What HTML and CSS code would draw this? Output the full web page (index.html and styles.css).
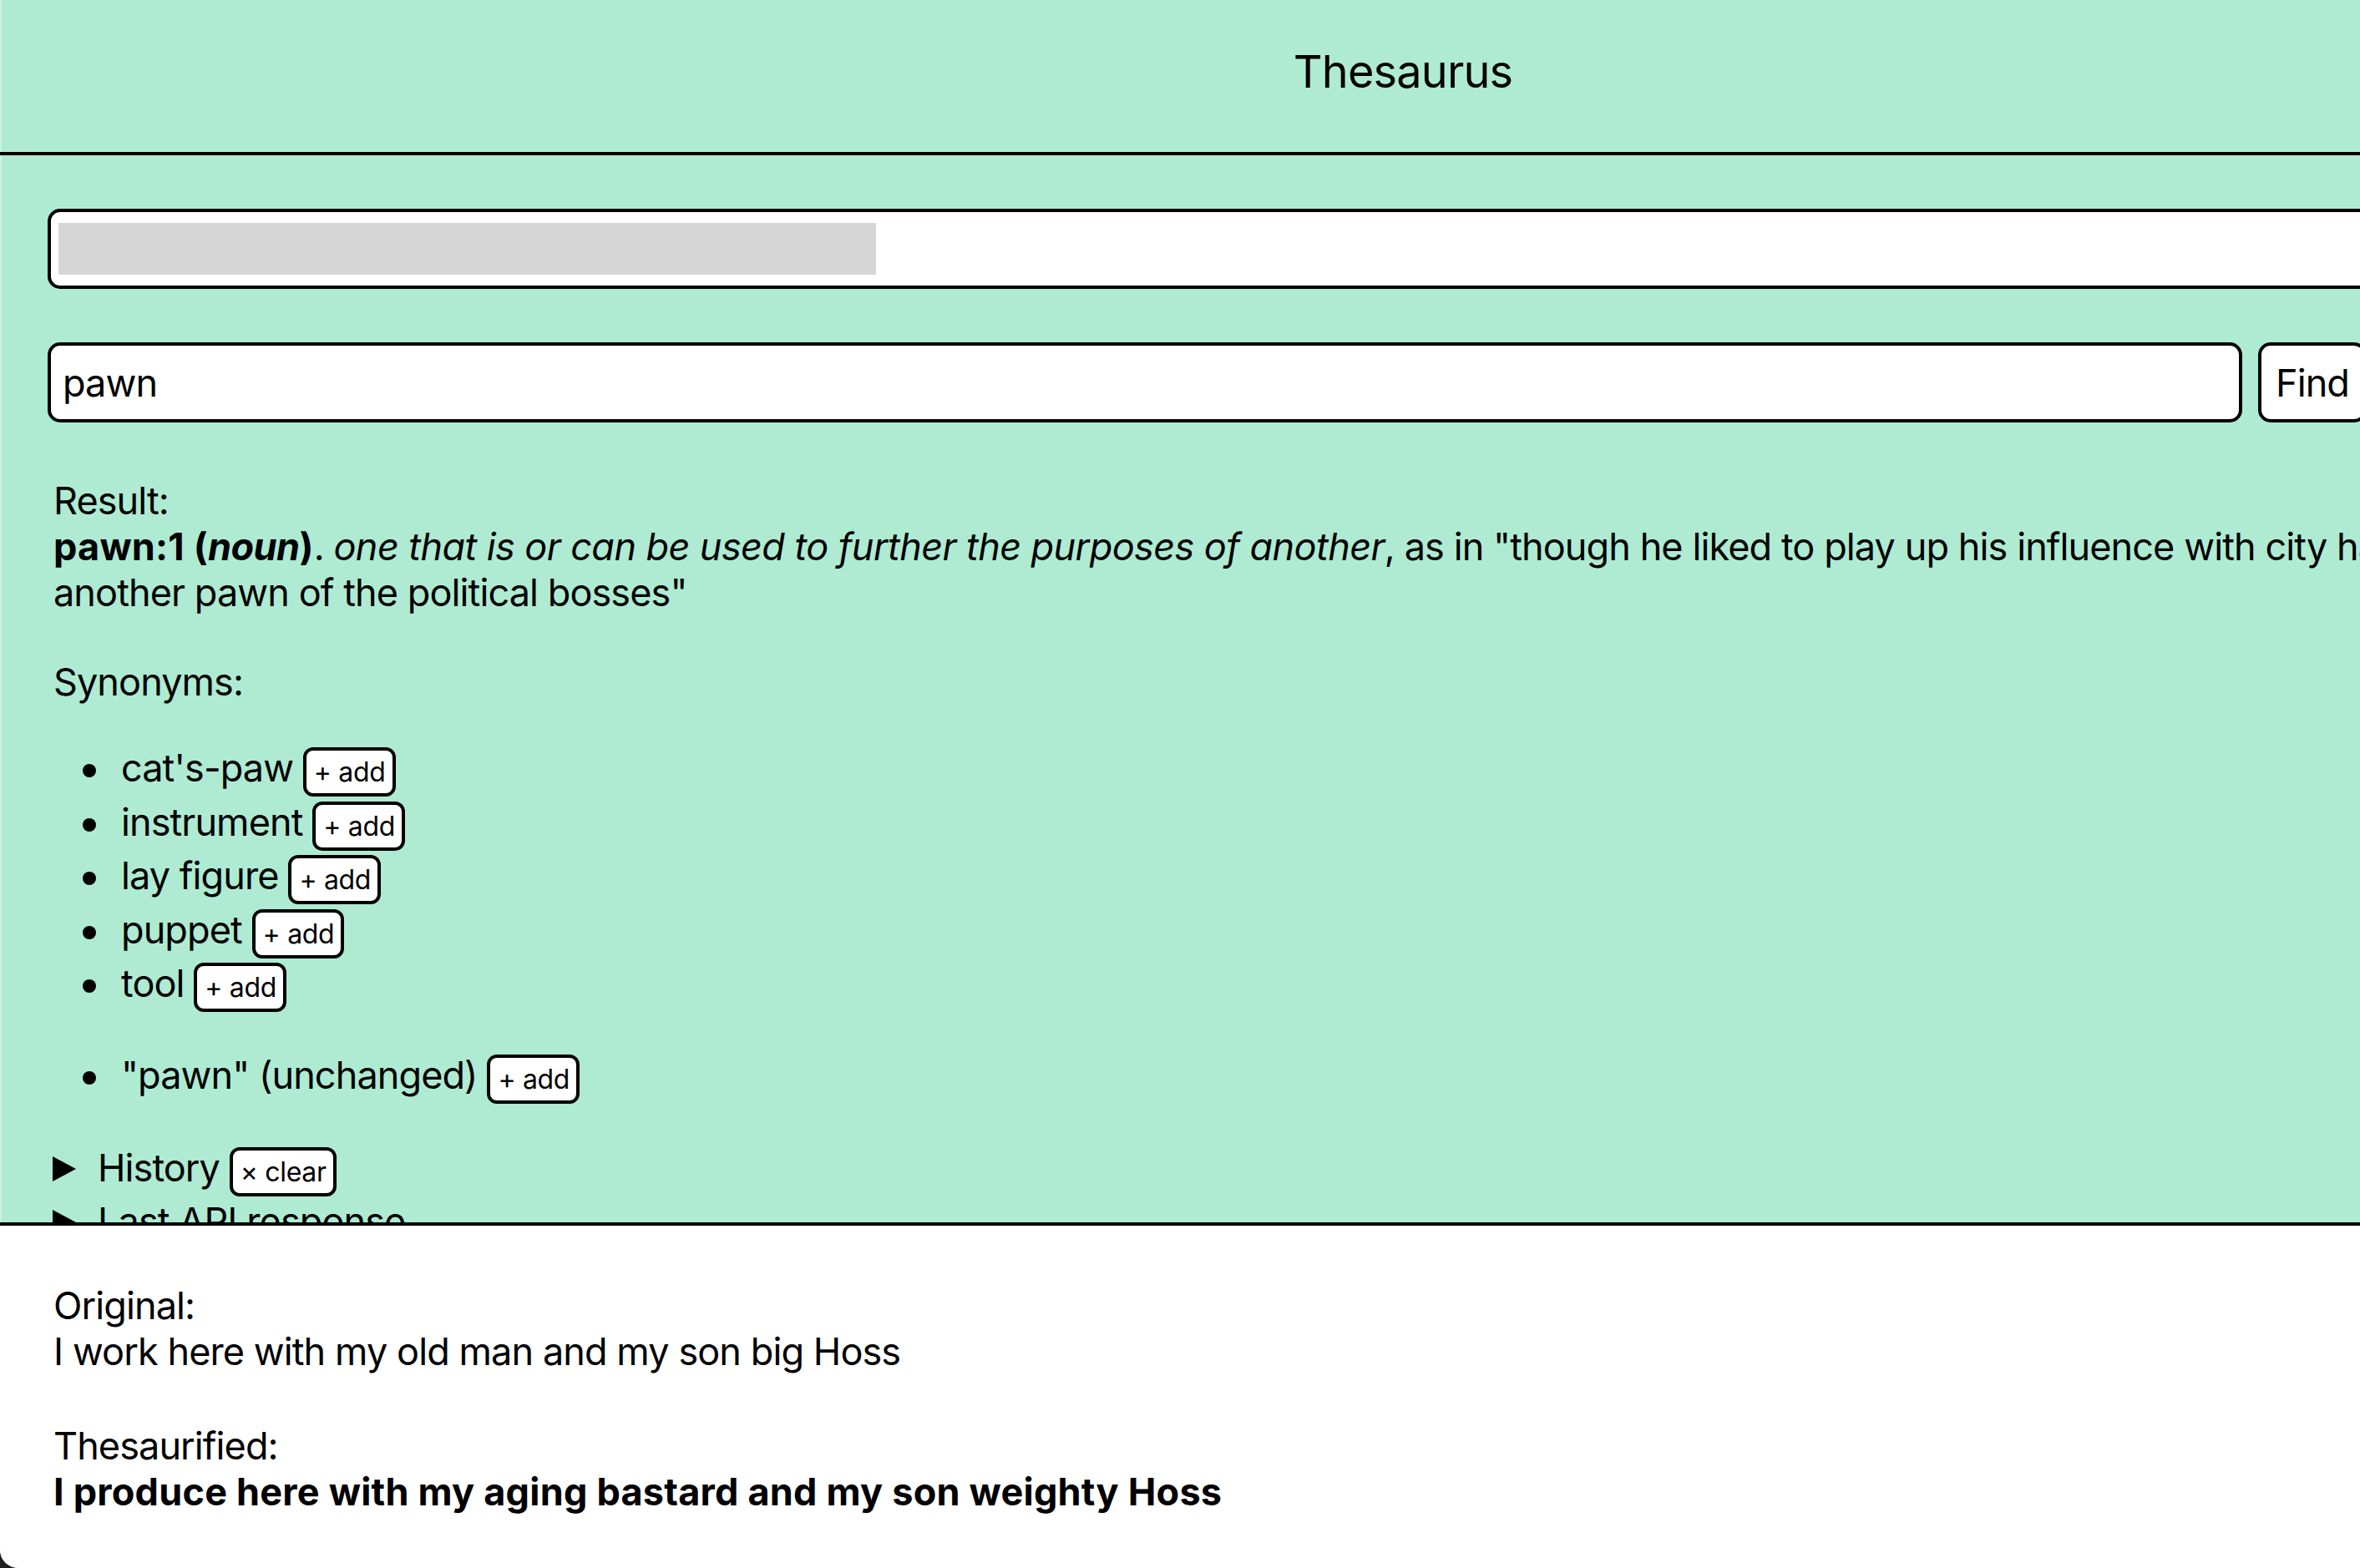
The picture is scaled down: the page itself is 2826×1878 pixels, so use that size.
FILE: index.html
```html
<!DOCTYPE html>
<html lang="en">
<head>
<meta charset="utf-8">
<title>Thesaurus</title>
<link rel="stylesheet" href="styles.css">
</head>
<body>
<div class="app">
  <header class="topbar">
    <h1 class="title">Thesaurus</h1>
  </header>
  <main class="main">
    <div class="sentence-box"><div class="sentence-fill"></div></div>
    <form class="search-row">
      <input class="search-input" type="text" value="pawn">
      <button class="find-btn" type="button">Find</button>
    </form>
    <section class="result">
      <p class="result-def">Result:<br><b>pawn:1 (<i>noun</i>)</b>. <i>one that is or can be used to further the purposes of another</i>, as in "though he liked to play up his influence with city hall, he was just<br>another pawn of the political bosses"</p>
      <p class="syn-label">Synonyms:</p>
      <ul class="syn-list">
        <li>cat's-paw <button class="chip" type="button">+ add</button></li>
        <li>instrument <button class="chip" type="button">+ add</button></li>
        <li>lay figure <button class="chip" type="button">+ add</button></li>
        <li>puppet <button class="chip" type="button">+ add</button></li>
        <li>tool <button class="chip" type="button">+ add</button></li>
      </ul>
      <ul class="syn-list">
        <li>"pawn" (unchanged) <button class="chip" type="button">+ add</button></li>
      </ul>
      <details class="drawer"><summary>History <button class="chip" type="button">× clear</button></summary></details>
      <details class="drawer"><summary>Last API response</summary></details>
    </section>
  </main>
  <footer class="output">
    <div class="out-block">
      <div>Original:</div>
      <div>I work here with my old man and my son big Hoss</div>
    </div>
    <div class="out-block">
      <div>Thesaurified:</div>
      <div class="out-strong">I produce here with my aging bastard and my son weighty Hoss</div>
    </div>
  </footer>
</div>
</body>
</html>
```

FILE: styles.css
```css
html, body {
  margin: 0;
  padding: 0;
  height: 100%;
  overflow: hidden;
  background: #1f1f1f;
}

body {
  font-family: Inter, "Noto Sans", "Liberation Sans", sans-serif;
  font-size: 45px;
  letter-spacing: -0.02em;
  color: #000;
}

.app {
  width: 3360px;
  height: 100vh;
  display: flex;
  flex-direction: column;
  background: #afebd3;
  border-bottom-left-radius: 22px;
  overflow: hidden;
  box-shadow: inset 2px 0 0 rgba(255, 255, 255, 0.35);
}

.topbar {
  flex-shrink: 0;
  height: 182px;
  border-bottom: 4px solid #000;
  display: flex;
  align-items: center;
  justify-content: center;
}

.title {
  margin: 0;
  font-size: 54px;
  font-weight: 400;
  letter-spacing: -0.015em;
  line-height: 1;
  padding-bottom: 10px;
}

.main {
  flex: 1;
  min-height: 0;
  overflow: hidden;
  padding: 64px 57px 0;
}

.sentence-box {
  border: 4px solid #000;
  border-radius: 15px;
  background: #fff;
  padding: 13px 9px;
  box-sizing: border-box;
  height: 96px;
}

.sentence-fill {
  width: 979px;
  height: 62px;
  background: #d6d6d6;
}

.search-row {
  margin: 64px 0 0;
  display: flex;
  gap: 19px;
  height: 96px;
}

.search-input {
  width: 2628px;
  box-sizing: border-box;
  height: 96px;
  border: 4px solid #000;
  border-radius: 15px;
  background: #fff;
  padding: 0 14px;
  font: inherit;
  letter-spacing: -0.02em;
  color: #000;
  outline: none;
}

.find-btn {
  box-sizing: border-box;
  height: 96px;
  border: 4px solid #000;
  border-radius: 15px;
  background: #fff;
  padding: 0 17px;
  font: inherit;
  letter-spacing: -0.02em;
  color: #000;
  text-align: left;
}

.result {
  padding-left: 7px;
  margin-top: 66px;
}

.result p {
  margin: 0;
}

.result-def {
  white-space: nowrap;
}

.result-def b {
  letter-spacing: 0.005em;
}

.result-def i {
  letter-spacing: -0.013em;
}

.syn-label {
  margin-top: 52px !important;
}

.syn-list {
  margin: 46px 0 46px;
  padding-left: 81px;
  list-style: none;
}

.syn-list li {
  padding-top: 2.4px;
}

.syn-list li::before {
  content: "";
  display: inline-block;
  width: 16px;
  height: 16px;
  border-radius: 50%;
  background: #000;
  margin-left: -46px;
  margin-right: 30px;
  vertical-align: 5px;
}

.chip {
  font-family: Inter, "Noto Sans", "Liberation Sans", sans-serif;
  font-size: 32px;
  letter-spacing: -0.01em;
  line-height: normal;
  color: #000;
  background: #fff;
  border: 4px solid #000;
  border-radius: 12px;
  padding: 6px 8px 6px 9px;
  margin: 0;
  vertical-align: baseline;
}

.drawer summary {
  list-style: none;
  padding-top: 2.4px;
  cursor: pointer;
}

.drawer summary::-webkit-details-marker {
  display: none;
}

.drawer summary::before {
  content: "";
  display: inline-block;
  width: 0;
  height: 0;
  border-top: 15px solid transparent;
  border-bottom: 15px solid transparent;
  border-left: 28px solid #000;
  margin-left: -1px;
  margin-right: 26px;
  vertical-align: 0;
}

.drawer:first-of-type {
  margin-top: 46px;
}

.output {
  flex-shrink: 0;
  background: #fff;
  border-top: 4px solid #000;
  padding: 68px 64px 64px;
  display: flex;
  flex-direction: column;
  gap: 58px;
}

.out-strong {
  font-weight: 700;
  letter-spacing: 0.005em;
}
```
